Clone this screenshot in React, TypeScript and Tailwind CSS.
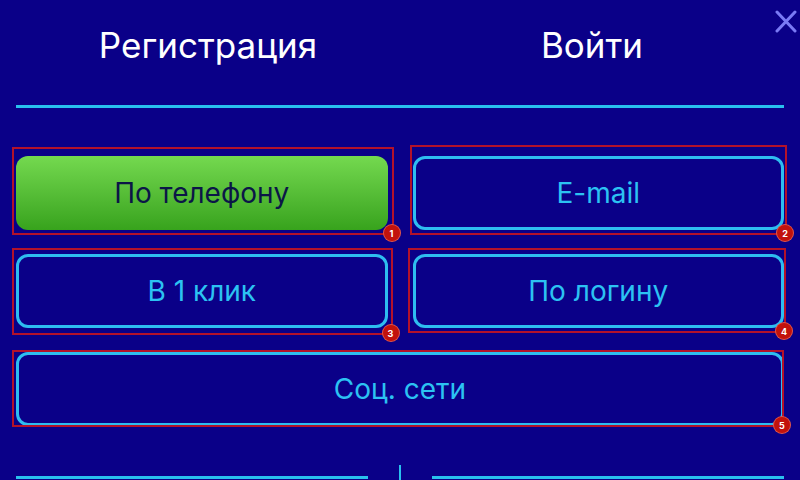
type Mark = { n: number; t: number; l: number; r: number; b: number };

const Badge = ({ m }: { m: Mark }) => (
  <span
    className="pointer-events-none absolute border-2 border-[#b3122a]"
    style={{ top: -m.t, left: -m.l, right: -m.r, bottom: -m.b }}
  >
    <span className="absolute -right-[8px] -bottom-[8px] flex h-[16px] w-[16px] items-center justify-center rounded-full bg-[#c2120c] text-[9px] font-bold leading-none text-white ring-1 ring-[#e2564a]">
      {m.n}
    </span>
  </span>
);

const OptionButton = ({ label, active, mark, wide }: { label: string; active?: boolean; mark: Mark; wide?: boolean }) => (
  <div className={`relative ${wide ? "col-span-2" : ""}`}>
    <button
      className={
        active
          ? "flex h-[74px] w-full items-center justify-center rounded-[12px] bg-gradient-to-b from-[#74d94f] to-[#37a31c] text-[28px] text-[#0b1647]"
          : "flex h-[74px] w-full items-center justify-center rounded-[12px] border-[3px] border-[#2ebdf0] text-[28px] text-[#2cc2f2]"
      }
    >
      {label}
    </button>
    <Badge m={mark} />
  </div>
);

export default function App() {
  return (
    <div className="relative h-[480px] w-[800px] overflow-hidden bg-[#0a0088] font-['Inter',sans-serif]">
      {/* close */}
      <button className="absolute right-[3px] top-[10px]">
        <svg width="22" height="23" viewBox="0 0 22 23" fill="none" stroke="#7a7af5" strokeWidth="3" strokeLinecap="round">
          <path d="M2 2 L20 21 M20 2 L2 21" />
        </svg>
      </button>

      <div className="flex h-[105px] px-4">
        <div className="flex w-1/2 justify-center pt-[21px] text-[35px] leading-[48px] text-white">Регистрация</div>
        <div className="flex w-1/2 justify-center pt-[21px] text-[35px] leading-[48px] text-white">Войти</div>
      </div>
      <div className="mx-4 h-[3px] bg-[#29c0ee]" />

      <div className="mt-[48px] grid grid-cols-2 gap-x-[25px] gap-y-[24px] px-4">
        <OptionButton label="По телефону" active mark={{ n: 1, t: 9, l: 4, r: 6, b: 5 }} />
        <OptionButton label="E-mail" mark={{ n: 2, t: 11, l: 3, r: 3, b: 5 }} />
        <OptionButton label="В 1 клик" mark={{ n: 3, t: 6, l: 4, r: 5, b: 7 }} />
        <OptionButton label="По логину" mark={{ n: 4, t: 6, l: 5, r: 2, b: 5 }} />
        <OptionButton label="Соц. сети" wide mark={{ n: 5, t: 2, l: 4, r: 0, b: 1 }} />
      </div>

      <div className="mt-[39px] flex h-[16px] items-end px-4">
        <div className="mb-[2px] h-[3px] flex-1 bg-[#29c0ee]" />
        <div className="mx-[31px] h-[16px] w-[2px] bg-[#29c0ee]" />
        <div className="mb-[2px] h-[3px] flex-1 bg-[#29c0ee]" />
      </div>
    </div>
  );
}
